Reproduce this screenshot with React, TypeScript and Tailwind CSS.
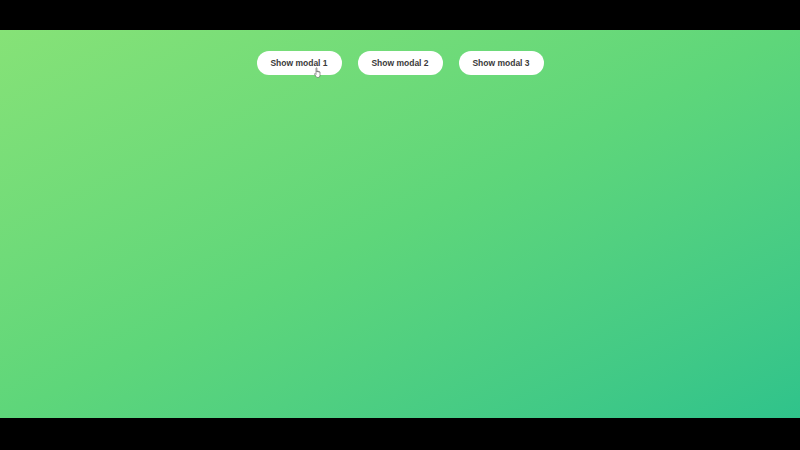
export default function App() {
  const labels = ['Show modal 1', 'Show modal 2', 'Show modal 3'];

  return (
    <div className="flex h-[450px] w-full flex-col bg-black" style={{ fontFamily: '"Liberation Sans", Arial, sans-serif' }}>
      <div className="h-[30px] shrink-0" />
      <main className="relative h-[388px] shrink-0 bg-gradient-to-br from-[#86e277] via-[#5ed67a] to-[#2fc38b]">
        <div className="flex justify-center gap-4 pt-[21px]">
          {labels.map((label) => (
            <button
              key={label}
              type="button"
              className="h-6 w-[85px] rounded-full bg-white text-[8.5px] font-bold text-[#3a3a3a]"
            >
              {label}
            </button>
          ))}
        </div>
        <svg className="absolute left-[313px] top-[37px]" width="10" height="12" viewBox="0 0 10 12">
          <path
            d="M3 1.2c0-.6.9-.6.9 0V5h.3V4.3c0-.5.8-.5.8 0V5h.2v-.4c0-.5.8-.5.8 0V5.3h.2v-.2c0-.5.8-.5.8 0v3.2c0 1.2-.8 2.2-2 2.2H4.7c-.8 0-1.3-.4-1.700-1L1.6 7.300c-.3-.5.3-1 .7-.6L3 7.4z"
            fill="#fff"
            stroke="#555"
            strokeWidth="0.6"
          />
        </svg>
      </main>
      <div className="h-[32px] shrink-0" />
    </div>
  );
}
